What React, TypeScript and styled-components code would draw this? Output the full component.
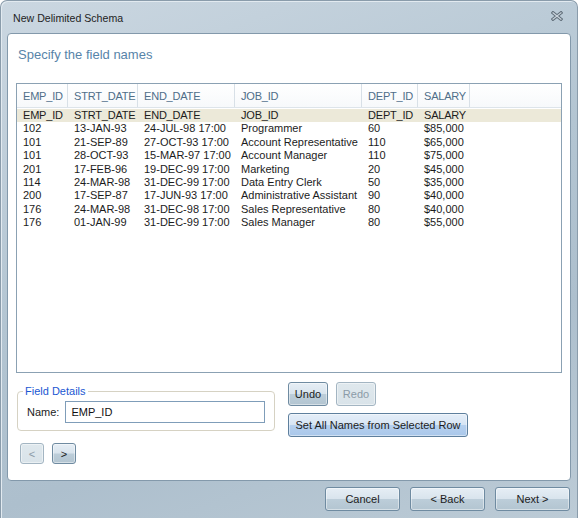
import React from 'react';
import styled, { createGlobalStyle } from 'styled-components';

const GlobalStyle = createGlobalStyle`
  html, body {
    margin: 0;
    padding: 0;
    background: #ffffff;
  }
  body {
    font-family: "Liberation Sans", Arial, sans-serif;
    font-size: 11px;
    color: #1c1c1c;
  }
`;

const Window = styled.div`
  box-sizing: border-box;
  display: flex;
  flex-direction: column;
  width: 578px;
  height: 518px;
  border: 1px solid #8a9cab;
  border-bottom: none;
  border-radius: 7px 7px 0 0;
  background: linear-gradient(160deg, #cbd7e1 0%, #b3c5d2 45%, #adbfcd 70%, #bccbd6 100%);
  box-shadow: inset 1px 1px 0 #e2eaf0;
  overflow: hidden;
`;

const TitleBar = styled.div`
  box-sizing: border-box;
  display: flex;
  align-items: center;
  justify-content: space-between;
  height: 32px;
  padding: 1px 14px 0 12px;
  flex: none;
`;

const Title = styled.span`
  font-size: 10.6px;
  color: #1e1e1e;
`;

const CloseButton = styled.span`
  display: flex;
  width: 12px;
  height: 10px;
  margin-top: -3px;
`;

const Panel = styled.div`
  display: flex;
  flex-direction: column;
  flex: none;
  height: 448px;
  margin: 0 6px 0 6px;
  background: #ffffff;
  border: 1px solid #8399ab;
  border-radius: 4px;
  box-sizing: border-box;
`;

const Heading = styled.h1`
  margin: 13px 0 0 10px;
  font-size: 13px;
  line-height: 16px;
  font-weight: 400;
  color: #5784a9;
`;

const Grid = styled.div`
  box-sizing: border-box;
  height: 290px;
  margin: 20px 8px 0 8px;
  border: 1px solid #8ba1b3;
  background: #ffffff;
`;

const Columns = '51px 70px 97px 127px 56px 52px 1fr';

const HeaderRow = styled.div`
  display: grid;
  grid-template-columns: ${Columns};
  height: 23px;
  background: linear-gradient(#ffffff, #f7f9fb);
  border-bottom: 1px solid #dde4ea;
`;

const HeaderCell = styled.div<{ $last?: boolean }>`
  display: flex;
  align-items: center;
  padding-left: 6px;
  color: #4f6e89;
  letter-spacing: -0.2px;
  border-right: ${(p) => (p.$last ? 'none' : '1px solid #d8e0e7')};
  white-space: nowrap;
  overflow: hidden;
`;

const Body = styled.div`
  padding-top: 1px;
`;

const DataRow = styled.div<{ $selected?: boolean }>`
  display: grid;
  grid-template-columns: ${Columns};
  height: 13.4px;
  line-height: 13.4px;
  background: ${(p) => (p.$selected ? '#ece9d9' : 'transparent')};
`;

const DataCell = styled.div<{ $caps?: boolean }>`
  padding-left: 6px;
  white-space: nowrap;
  color: #1c1c1c;
  letter-spacing: ${(p) => (p.$caps ? '-0.2px' : '0')};
`;

const Lower = styled.div`
  display: flex;
  gap: 14px;
  margin: 9px 0 0 9px;
`;

const LeftColumn = styled.div`
  display: flex;
  flex-direction: column;
  width: 257px;
  margin-top: 3px;
`;

const Group = styled.fieldset`
  margin: 0;
  padding: 3px 9px 7px 9px;
  border: 1px solid #d6d2c3;
  border-radius: 4px;
`;

const GroupTitle = styled.legend`
  margin-left: -4px;
  padding: 0 2px;
  font-size: 11px;
  line-height: 13px;
  color: #1b57d2;
`;

const FieldRow = styled.div`
  display: flex;
  align-items: center;
  gap: 6px;
`;

const Label = styled.label`
  font-size: 11px;
  color: #1c1c1c;
`;

const TextInput = styled.input`
  box-sizing: border-box;
  width: 200px;
  height: 22px;
  padding: 0 5px;
  border: 1px solid #7f9db9;
  font-family: "Liberation Sans", Arial, sans-serif;
  font-size: 11px;
  color: #111;
  outline: none;
`;

const NavRow = styled.div`
  display: flex;
  gap: 8px;
  margin: 12px 0 0 3px;
`;

const RightColumn = styled.div`
  display: flex;
  flex-direction: column;
  align-items: flex-start;
  gap: 7px;
`;

const ButtonRow = styled.div`
  display: flex;
  gap: 8px;
`;

type Tone = 'normal' | 'disabled' | 'focus';

const backgrounds: Record<Tone, string> = {
  normal: 'linear-gradient(#e6eef5 0%, #d9e4ed 48%, #bccdd9 52%, #b3c5d1 100%)',
  disabled: 'linear-gradient(#dfe8ed 0%, #d9e3e9 100%)',
  focus: 'linear-gradient(#e5eef8 0%, #d7e5f4 48%, #b6d0ee 52%, #a9c7ea 100%)',
};

const borders: Record<Tone, string> = {
  normal: '#6f8ba1',
  disabled: '#a3b5c2',
  focus: '#5e7f9d',
};

const Button = styled.button<{ $tone?: Tone; $w: number; $h?: number }>`
  box-sizing: border-box;
  width: ${(p) => p.$w}px;
  height: ${(p) => p.$h ?? 24}px;
  padding: 0;
  border: 1px solid ${(p) => borders[p.$tone ?? 'normal']};
  border-radius: 3px;
  background: ${(p) => backgrounds[p.$tone ?? 'normal']};
  box-shadow: inset 0 0 0 1px rgba(255, 255, 255, 0.45);
  font-family: "Liberation Sans", Arial, sans-serif;
  font-size: 11px;
  color: ${(p) => (p.$tone === 'disabled' ? '#8b9ba7' : '#1c1c1c')};
  cursor: default;
`;

const Footer = styled.div`
  display: flex;
  justify-content: flex-end;
  gap: 10px;
  padding: 6px 7px 0 0;
  flex: 1;
`;

const columns = ['EMP_ID', 'STRT_DATE', 'END_DATE', 'JOB_ID', 'DEPT_ID', 'SALARY'];

const rows = [
  ['EMP_ID', 'STRT_DATE', 'END_DATE', 'JOB_ID', 'DEPT_ID', 'SALARY'],
  ['102', '13-JAN-93', '24-JUL-98 17:00', 'Programmer', '60', '$85,000'],
  ['101', '21-SEP-89', '27-OCT-93 17:00', 'Account Representative', '110', '$65,000'],
  ['101', '28-OCT-93', '15-MAR-97 17:00', 'Account Manager', '110', '$75,000'],
  ['201', '17-FEB-96', '19-DEC-99 17:00', 'Marketing', '20', '$45,000'],
  ['114', '24-MAR-98', '31-DEC-99 17:00', 'Data Entry Clerk', '50', '$35,000'],
  ['200', '17-SEP-87', '17-JUN-93 17:00', 'Administrative Assistant', '90', '$40,000'],
  ['176', '24-MAR-98', '31-DEC-98 17:00', 'Sales Representative', '80', '$40,000'],
  ['176', '01-JAN-99', '31-DEC-99 17:00', 'Sales Manager', '80', '$55,000'],
];

const CloseIcon = () => (
  <svg width="12" height="10" viewBox="0 0 12 10">
    <path d="M2 1.8 L10 8.2 M10 1.8 L2 8.2" stroke="#5f6d79" strokeWidth="3.2" strokeLinecap="square" />
    <path d="M2 1.8 L10 8.2 M10 1.8 L2 8.2" stroke="#c9d3db" strokeWidth="1.2" strokeLinecap="square" />
  </svg>
);

const App = () => {
  return (
    <>
      <GlobalStyle />
      <Window>
        <TitleBar>
          <Title>New Delimited Schema</Title>
          <CloseButton>
            <CloseIcon />
          </CloseButton>
        </TitleBar>
        <Panel>
          <Heading>Specify the field names</Heading>
          <Grid>
            <HeaderRow>
              {columns.map((c) => (
                <HeaderCell key={c}>{c}</HeaderCell>
              ))}
              <HeaderCell $last />
            </HeaderRow>
            <Body>
              {rows.map((r, i) => (
                <DataRow key={i} $selected={i === 0}>
                  {r.map((v, j) => (
                    <DataCell key={j} $caps={i === 0}>
                      {v}
                    </DataCell>
                  ))}
                  <DataCell />
                </DataRow>
              ))}
            </Body>
          </Grid>
          <Lower>
            <LeftColumn>
              <Group>
                <GroupTitle>Field Details</GroupTitle>
                <FieldRow>
                  <Label htmlFor="field-name">Name:</Label>
                  <TextInput id="field-name" defaultValue="EMP_ID" />
                </FieldRow>
              </Group>
              <NavRow>
                <Button $tone="disabled" $w={24} $h={21}>&lt;</Button>
                <Button $w={24} $h={21}>&gt;</Button>
              </NavRow>
            </LeftColumn>
            <RightColumn>
              <ButtonRow>
                <Button $w={40}>Undo</Button>
                <Button $tone="disabled" $w={40}>Redo</Button>
              </ButtonRow>
              <Button $tone="focus" $w={180}>Set All Names from Selected Row</Button>
            </RightColumn>
          </Lower>
        </Panel>
        <Footer>
          <Button $w={75}>Cancel</Button>
          <Button $w={75}>&lt; Back</Button>
          <Button $w={75}>Next &gt;</Button>
        </Footer>
      </Window>
    </>
  );
};

export default App;
